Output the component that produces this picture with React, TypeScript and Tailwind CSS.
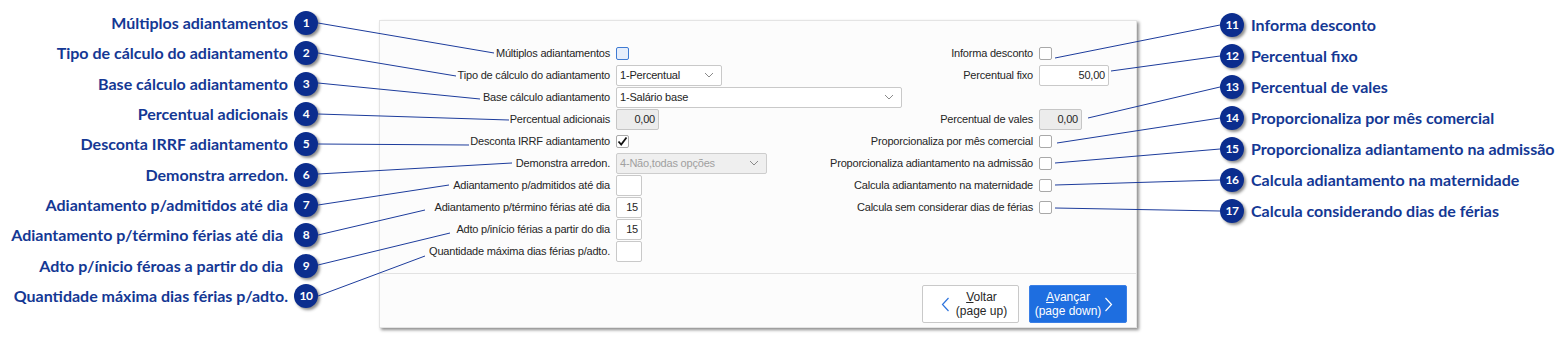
import React from "react";

const leftNotes = [
  { n: 1, t: "Múltiplos adiantamentos", pad: false },
  { n: 2, t: "Tipo de cálculo do adiantamento", pad: false },
  { n: 3, t: "Base cálculo adiantamento", pad: false },
  { n: 4, t: "Percentual adicionais", pad: false },
  { n: 5, t: "Desconta IRRF adiantamento", pad: false },
  { n: 6, t: "Demonstra arredon.", pad: false },
  { n: 7, t: "Adiantamento p/admitidos até dia", pad: false },
  { n: 8, t: "Adiantamento p/término férias até dia", pad: true },
  { n: 9, t: "Adto p/ínicio féroas a partir do dia", pad: true },
  { n: 10, t: "Quantidade máxima dias férias p/adto.", pad: false },
];

const rightNotes = [
  { n: 11, t: "Informa desconto" },
  { n: 12, t: "Percentual fixo" },
  { n: 13, t: "Percentual de vales" },
  { n: 14, t: "Proporcionaliza por mês comercial" },
  { n: 15, t: "Proporcionaliza adiantamento na admissão" },
  { n: 16, t: "Calcula adiantamento na maternidade" },
  { n: 17, t: "Calcula considerando dias de férias" },
];

const lines: [number, number, number, number][] = [
  [318, 23, 494, 53],
  [318, 53, 456, 76],
  [318, 83, 480, 99],
  [318, 114, 509, 120],
  [318, 144, 469, 145],
  [318, 174, 512, 163],
  [318, 205, 449, 185],
  [318, 235, 425, 210],
  [318, 265, 450, 233],
  [318, 296, 425, 256],
  [1220, 25, 1055, 58],
  [1220, 56, 1111, 71],
  [1220, 87, 1088, 118],
  [1220, 118, 1057, 143],
  [1220, 149, 1055, 163],
  [1220, 180, 1055, 185],
  [1220, 211, 1055, 208],
];

function Badge({ n }: { n: number }) {
  return (
    <div className="w-[24px] h-[24px] rounded-full bg-[#0b2d8e] text-white flex items-center justify-center text-[12px] font-bold shadow-[2px_2px_3px_rgba(0,0,0,0.45)] shrink-0 tracking-[-0.5px]">
      {n}
    </div>
  );
}

function Chevron({ className }: { className?: string }) {
  return (
    <svg width="10" height="8" viewBox="0 0 10 8" className={className}>
      <path d="M1 2 L5 6 L9 2" fill="none" stroke="#8a8a8a" strokeWidth="1" />
    </svg>
  );
}

function Checkbox({ checked, focus }: { checked?: boolean; focus?: boolean }) {
  return (
    <div
      className={
        focus
          ? "w-[13px] h-[13px] rounded-[2px] border border-[#3f7bd3] bg-[#e6eefb]"
          : "w-[13px] h-[13px] rounded-[2px] border border-[#a9a9a9] bg-white flex items-center justify-center"
      }
    >
      {checked && (
        <svg width="11" height="11" viewBox="0 0 11 11">
          <path d="M1.5 5.5 L4.2 8.5 L9.5 1.5" fill="none" stroke="#111" strokeWidth="1.8" />
        </svg>
      )}
    </div>
  );
}

function Select({ w, text, disabled }: { w: string; text: string; disabled?: boolean }) {
  return (
    <div
      className={`${w} h-[21px] rounded-[2px] border flex items-center justify-between pl-[3px] pr-[7px] ${
        disabled ? "bg-[#efefef] border-[#cdcdcd] text-[#a0a0a0]" : "bg-white border-[#c9c9c9] text-[#1e1e1e]"
      }`}
    >
      <span>{text}</span>
      <Chevron />
    </div>
  );
}

function Input({ w, text, gray }: { w: string; text?: string; gray?: boolean }) {
  return (
    <div
      className={`${w} h-[21px] rounded-[2px] border flex items-center justify-end pr-[3px] ${
        gray ? "bg-[#ececec] border-[#c6c6c6]" : "bg-white border-[#c9c9c9]"
      }`}
    >
      {text}
    </div>
  );
}

type Row = { l: string; lc: React.ReactNode; r?: string; rc?: React.ReactNode };

const rows: Row[] = [
  { l: "Múltiplos adiantamentos", lc: <Checkbox focus />, r: "Informa desconto", rc: <Checkbox /> },
  { l: "Tipo de cálculo do adiantamento", lc: <Select w="w-[106px]" text="1-Percentual" />, r: "Percentual fixo", rc: <Input w="w-[70px]" text="50,00" /> },
  { l: "Base cálculo adiantamento", lc: <Select w="w-[286px]" text="1-Salário base" /> },
  { l: "Percentual adicionais", lc: <Input w="w-[43px]" text="0,00" gray />, r: "Percentual de vales", rc: <Input w="w-[43px]" text="0,00" gray /> },
  { l: "Desconta IRRF adiantamento", lc: <Checkbox checked />, r: "Proporcionaliza por mês comercial", rc: <Checkbox /> },
  { l: "Demonstra arredon.", lc: <Select w="w-[151px]" text="4-Não,todas opções" disabled />, r: "Proporcionaliza adiantamento na admissão", rc: <Checkbox /> },
  { l: "Adiantamento p/admitidos até dia", lc: <Input w="w-[26px]" />, r: "Calcula adiantamento na maternidade", rc: <Checkbox /> },
  { l: "Adiantamento p/término férias até dia", lc: <Input w="w-[26px]" text="15" />, r: "Calcula sem considerar dias de férias", rc: <Checkbox /> },
  { l: "Adto p/início férias a partir do dia", lc: <Input w="w-[26px]" text="15" /> },
  { l: "Quantidade máxima dias férias p/adto.", lc: <Input w="w-[26px]" /> },
];

export default function App() {
  return (
    <div className="relative w-[1568px] h-[337px] bg-white flex overflow-hidden">
      {/* left annotations */}
      <div className="w-[318px] shrink-0 pt-[8px] flex flex-col font-['Lato',sans-serif] text-[16px] font-bold text-[#143894]">
        {leftNotes.map((x) => (
          <div key={x.n} className="h-[30.3px] flex items-center justify-end gap-[6px]">
            <span className={x.pad ? "mr-[5px] whitespace-nowrap" : "whitespace-nowrap"}>{x.t}</span>
            <Badge n={x.n} />
          </div>
        ))}
      </div>

      {/* panel */}
      <div className="ml-[61px] mt-[20px] w-[758px] h-[308px] shrink-0 bg-[#fcfcfc] border border-[#e4e4e4] shadow-[2px_2px_3px_rgba(0,0,0,0.45)] flex flex-col font-['Liberation_Sans',sans-serif] text-[11px] tracking-[-0.2px] text-[#262626]">
        <div className="h-[252px] pt-[21px] flex flex-col">
          {rows.map((r, i) => (
            <div key={i} className="h-[22px] grid grid-cols-[230px_417px_97px] gap-x-[6px] items-center">
              <div className="text-right whitespace-nowrap">{r.l}</div>
              <div className="flex items-center justify-between">
                <div className="flex items-center">{r.lc}</div>
                <div className="text-right whitespace-nowrap">{r.r}</div>
              </div>
              <div className="flex items-center">{r.rc}</div>
            </div>
          ))}
        </div>
        <div className="flex-1 border-t border-[#e2e2e2] flex justify-end items-start pt-[11px] pr-[9px] gap-[10px] tracking-normal">
          <div className="w-[97px] h-[38px] rounded-[2px] border border-[#c9c9c9] bg-white flex items-center relative">
            <svg width="9" height="15" viewBox="0 0 9 15" className="absolute left-[18px] top-[11px]">
              <path d="M7.5 1 L1.5 7.5 L7.5 14" fill="none" stroke="#2f74dd" strokeWidth="1.2" />
            </svg>
            <div className="flex-1 text-center pl-[22px] leading-[14px] text-[12px]">
              <div><span className="underline">V</span>oltar</div>
              <div>(page up)</div>
            </div>
          </div>
          <div className="w-[98px] h-[38px] rounded-[2px] border border-[#3a7fe6] bg-[#1e6ee0] text-white flex items-center relative">
            <div className="flex-1 text-center pr-[20px] leading-[14px] text-[12px]">
              <div><span className="underline">A</span>vançar</div>
              <div>(page down)</div>
            </div>
            <svg width="9" height="15" viewBox="0 0 9 15" className="absolute right-[13px] top-[11px]">
              <path d="M1.5 1 L7.5 7.5 L1.5 14" fill="none" stroke="#ffffff" strokeWidth="1.2" />
            </svg>
          </div>
        </div>
      </div>

      {/* right annotations */}
      <div className="ml-[83px] shrink-0 pt-[9.5px] flex flex-col font-['Lato',sans-serif] text-[16px] font-bold text-[#143894]">
        {rightNotes.map((x) => (
          <div key={x.n} className="h-[31px] flex items-center gap-[7px]">
            <Badge n={x.n} />
            <span className="whitespace-nowrap">{x.t}</span>
          </div>
        ))}
      </div>

      {/* connector lines */}
      <svg className="absolute inset-0 pointer-events-none" width="1568" height="337" viewBox="0 0 1568 337">
        {lines.map(([x1, y1, x2, y2], i) => (
          <line key={i} x1={x1} y1={y1} x2={x2} y2={y2} stroke="#1d3c9c" strokeWidth="1" />
        ))}
      </svg>
    </div>
  );
}
